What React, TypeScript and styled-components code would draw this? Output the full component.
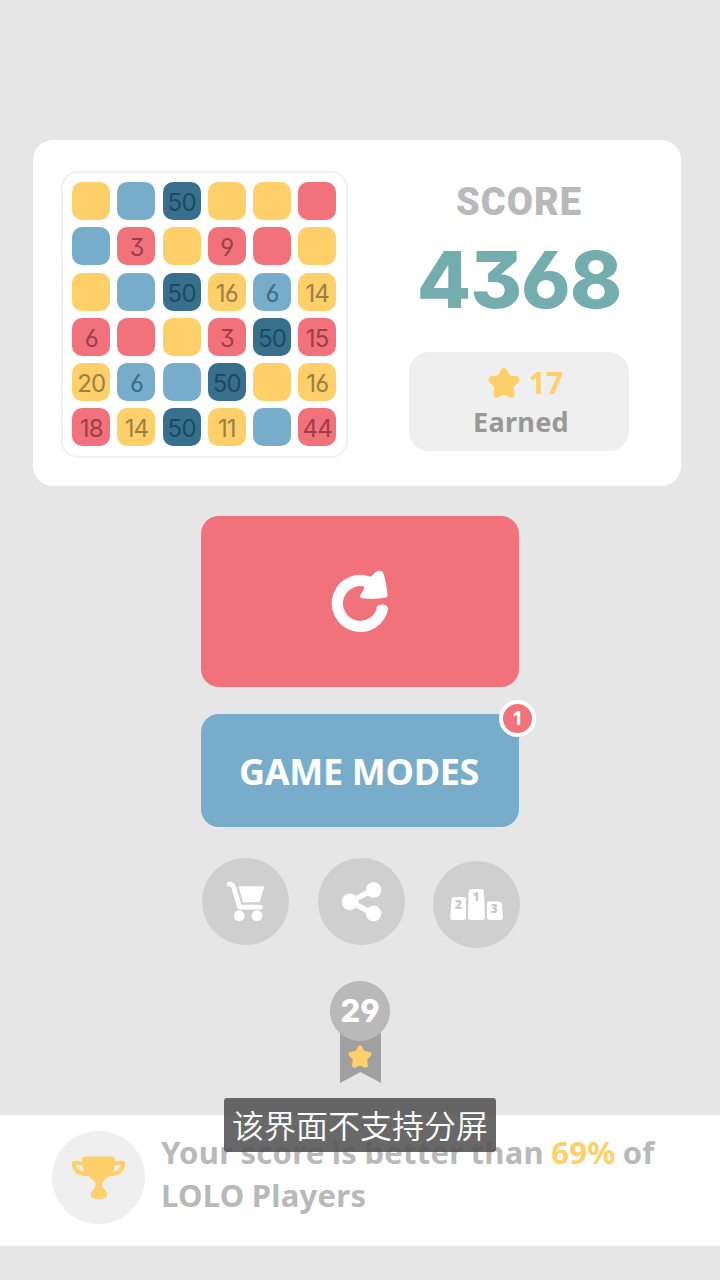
import React from "react";
import styled, { createGlobalStyle } from "styled-components";

const YELLOW = "#ffcf69";
const BLUE = "#77adcb";
const RED = "#f1727b";
const NAVY = "#386f8d";

const textFont = `"Noto Sans", "Open Sans", sans-serif`;
const displayFont = `Inter, "Liberation Sans", sans-serif`;

const GlobalStyle = createGlobalStyle`
  * { box-sizing: border-box; }
  body { margin: 0; background: #e6e6e6; font-family: ${textFont}; }
`;

const Screen = styled.main`
  position: relative;
  width: 720px;
  height: 1280px;
  overflow: hidden;
  padding-top: 140px;
  background: #e6e6e6;
  display: flex;
  flex-direction: column;
  align-items: center;
`;

const ScoreCard = styled.section`
  width: 648px;
  height: 346px;
  margin-right: 6px;
  padding: 31px 0 0 28px;
  background: #fff;
  border-radius: 20px;
  display: flex;
  align-items: flex-start;
`;

const Board = styled.div`
  width: 287px;
  height: 287px;
  padding: 9.3px;
  border: 2px solid #f1f1f2;
  border-radius: 17px;
  display: grid;
  grid-template-columns: repeat(6, 38px);
  grid-auto-rows: 38px;
  gap: 7.2px;
`;

const Tile = styled.div<{ $color: string; $ink: string }>`
  border-radius: 10px;
  background: ${(p) => p.$color};
  color: ${(p) => p.$ink};
  font: 400 24px/41px ${displayFont};
  font-feature-settings: "cv03", "cv04", "cv09";
  letter-spacing: -0.8px;
  text-align: center;
`;

const Summary = styled.div`
  width: 220px;
  margin-left: 61px;
  display: flex;
  flex-direction: column;
  align-items: center;
`;

const ScoreLabel = styled.div`
  margin-top: 11px;
  height: 40px;
  color: #b9b9b9;
  font: 900 38px/40px Roboto, sans-serif;
  letter-spacing: 1px;
`;

const ScoreValue = styled.div`
  margin-top: 17px;
  height: 80px;
  color: #74adae;
  font: 800 79px/80px ${displayFont};
  font-feature-settings: "cv03", "cv04", "cv09";
  letter-spacing: -1px;
  white-space: nowrap;
`;

const Earned = styled.div`
  margin-top: 33px;
  width: 220px;
  height: 99px;
  padding-top: 11px;
  border-radius: 20px;
  background: #efefef;
  color: #989898;
  display: flex;
  flex-direction: column;
  align-items: center;
  font: 700 27px/38px ${textFont};
  letter-spacing: 0.3px;
`;

const EarnedCaption = styled.span`
  margin-left: 4px;
`;

const EarnedCount = styled.div`
  display: flex;
  align-items: center;
  gap: 9px;
  height: 40px;
  margin-left: 13px;
  color: ${YELLOW};
  font-size: 30px;
`;

const ActionButton = styled.button<{ $color: string; $height: number; $top: number }>`
  position: relative;
  flex: none;
  width: 318px;
  height: ${(p) => p.$height}px;
  margin: ${(p) => p.$top}px 0 0;
  padding: 0;
  border: 0;
  border-radius: 18px;
  background: ${(p) => p.$color};
  color: #fff;
  display: flex;
  align-items: center;
  justify-content: center;
  font: 700 36px/50px ${textFont};
  letter-spacing: -0.3px;
`;

const ButtonLabel = styled.span`
  padding-top: 2px;
  margin-right: 2px;
`;

const Badge = styled.span`
  position: absolute;
  top: -14px;
  right: -17px;
  width: 37px;
  height: 37px;
  border: 4.5px solid #fff;
  border-radius: 50%;
  background: ${RED};
  font: 700 19px/28px ${textFont};
  text-align: center;
`;

const RoundActions = styled.nav`
  margin-top: 31px;
  height: 90px;
  display: flex;
  gap: 28.5px;
  margin-left: 2px;
`;

const RoundButton = styled.button<{ $drop?: number }>`
  width: 87px;
  height: 87px;
  margin: ${(p) => p.$drop ?? 0}px 0 0;
  padding: 0;
  border: 0;
  border-radius: 50%;
  background: #cfcfcf;
  svg { display: block; }
`;

const Medal = styled.div`
  margin-top: 33px;
  height: 103px;
  display: flex;
  flex-direction: column;
  align-items: center;
`;

const MedalDisc = styled.div`
  z-index: 1;
  width: 60px;
  height: 60px;
  border-radius: 50%;
  background: #b9b9b9;
  color: #fff;
  font: 800 31px/60px ${displayFont};
  font-feature-settings: "cv04";
  text-align: center;
`;

const Ribbon = styled.svg`
  margin-top: -14px;
  display: block;
`;

const Footer = styled.footer`
  align-self: stretch;
  margin-top: 31px;
  height: 131px;
  padding: 16px 0 0 52px;
  background: #fff;
  display: flex;
  gap: 16px;
`;

const TrophyDisc = styled.div`
  width: 93px;
  height: 93px;
  border-radius: 50%;
  background: #efefef;
  svg { display: block; }
`;

const Ranking = styled.p`
  margin: 0;
  color: #b9b9b9;
  font: 700 31px/42.5px ${textFont};
  letter-spacing: 0.25px;
  word-spacing: -1px;
  white-space: nowrap;
`;

const Percent = styled.span`
  color: ${YELLOW};
`;

const Toast = styled.div`
  position: absolute;
  left: 224px;
  top: 1098px;
  width: 272px;
  height: 54px;
  border-radius: 3px;
  background: rgba(82, 82, 82, 0.87);
  color: #fff;
  font: 350 32px/53px "Noto Sans CJK SC", sans-serif;
  text-align: center;
  white-space: nowrap;
`;

const tones: Record<string, [string, string]> = {
  y: [YELLOW, "#998044"],
  b: [BLUE, "#426b84"],
  r: [RED, "#9c3f4b"],
  n: [NAVY, "#1f4961"],
};

const board = [
  "y b n50 y y r",
  "b r3 y r9 r y",
  "y b n50 y16 b6 y14",
  "r6 r y r3 n50 r15",
  "y20 b6 b n50 y y16",
  "r18 y14 n50 y11 b r44",
];

const starPath =
  "M16 4.5 L19.5 11.4 L27.8 12.8 L22 18.8 L23.2 27 L16 23.8 L8.8 27 L10 18.8 L4.2 12.8 L12.5 11.4 Z";

const Star = ({ size }: { size: number }) => (
  <svg width={size} height={size} viewBox="0 0 32 32">
    <path d={starPath} fill={YELLOW} stroke={YELLOW} strokeWidth="7" strokeLinejoin="round" />
  </svg>
);

const RestartIcon = () => (
  <svg width="60" height="66" viewBox="0 0 60 66">
    <path d="M40 13.7 A22.9 22.9 0 1 0 52.8 38.3" fill="none" stroke="#fff" strokeWidth="11.2" />
    <ellipse cx="52.1" cy="38.6" rx="5.4" ry="3" fill="#fff" />
    <path
      d="M36.5 7 Q39.8 8.8 42 6.7 Q46 1.7 49.6 1.7 Q52.8 1.7 54 6 Q56.2 13.5 57.5 25.5 Q57.7 28.2 55.2 28.8 Q43 31 31.2 29 Q29.2 28.2 30.8 25.2 Q34.3 21.2 34.8 16.7 Z"
      fill="#fff"
    />
  </svg>
);

const CartIcon = () => (
  <svg width="87" height="87" viewBox="0 0 87 87" fill="#fff">
    <path d="M27 26.2 Q31 26 32 30 L37.5 49.2 H58.5" fill="none" stroke="#fff" strokeWidth="4.8" strokeLinecap="round" strokeLinejoin="round" />
    <path d="M37.5 29 H61.5 L57 43.5 H41.5 Z" stroke="#fff" strokeWidth="1.4" strokeLinejoin="round" />
    <circle cx="37.2" cy="57.7" r="5.4" />
    <circle cx="55" cy="57.7" r="5.4" />
  </svg>
);

const ShareIcon = () => (
  <svg width="87" height="87" viewBox="0 0 87 87" fill="#fff">
    <path d="M56 31.5 L32 43.7 L56 55.8" fill="none" stroke="#fff" strokeWidth="5.4" />
    <circle cx="32" cy="43.9" r="8.3" />
    <circle cx="55.6" cy="32" r="7.8" />
    <circle cx="55.6" cy="55.6" r="7.8" />
  </svg>
);

const PodiumDigit = styled.text`
  fill: #c8c8c8;
  font: 900 12px ${textFont};
  text-anchor: middle;
`;

const PodiumIcon = () => (
  <svg width="87" height="87" viewBox="0 0 87 87" fill="#fff">
    <path d="M21.5 36 H30 Q33 36 33 39 V56 Q33 59 30 59 H20 Q17 59 17.3 56 L18.4 39 Q18.6 36 21.5 36 Z" />
    <path d="M38.6 28 H48 Q50.7 28 50.9 31 L52 56 Q52 59 49 59 H38 Q35 59 35 56 L35.7 31 Q35.8 28 38.6 28 Z" />
    <path d="M56.5 40.5 H66 Q68.5 40.5 68.8 43 L70 56 Q70 59 67 59 H57 Q54 59 54 56 V43 Q54 40.5 56.5 40.5 Z" />
    <PodiumDigit x="25.5" y="47.6">2</PodiumDigit>
    <PodiumDigit x="43" y="39.6">1</PodiumDigit>
    <PodiumDigit x="61.3" y="51.6">3</PodiumDigit>
  </svg>
);

const TrophyIcon = () => (
  <svg width="93" height="93" viewBox="0 0 93 93" fill={YELLOW}>
    <path d="M30 28 Q30 25.5 33 25.5 H60 Q63 25.5 63 28 C63 37 62 42 56 46 Q51 49.5 50 53 Q50 56 53 59 Q56 62 55 65 Q53 68 46.5 68 Q40 68 38.5 65 Q38 62 41 59 Q44 56 43.5 53 Q42.5 49.5 37.5 46 C31 42 30 37 30 28 Z" />
    <path
      d="M31 33 Q26 31 21.8 32 Q22.5 43 36 43.2 M62 33 Q67 31 71.2 32 Q70.5 43 57 43.2"
      fill="none"
      stroke={YELLOW}
      strokeWidth="4"
      strokeLinejoin="round"
    />
  </svg>
);

export default function App() {
  return (
    <>
      <GlobalStyle />
      <Screen>
        <ScoreCard>
          <Board>
            {board.flatMap((row, r) =>
              row.split(" ").map((cell, c) => (
                <Tile key={`${r}-${c}`} $color={tones[cell[0]][0]} $ink={tones[cell[0]][1]}>
                  {cell.slice(1)}
                </Tile>
              ))
            )}
          </Board>
          <Summary>
            <ScoreLabel>SCORE</ScoreLabel>
            <ScoreValue>4368</ScoreValue>
            <Earned>
              <EarnedCount>
                <Star size={32} />
                <span>17</span>
              </EarnedCount>
              <EarnedCaption>Earned</EarnedCaption>
            </Earned>
          </Summary>
        </ScoreCard>

        <ActionButton $color={RED} $height={171} $top={30} aria-label="Restart">
          <RestartIcon />
        </ActionButton>
        <ActionButton $color={BLUE} $height={113} $top={27}>
          <ButtonLabel>GAME MODES</ButtonLabel>
          <Badge>1</Badge>
        </ActionButton>

        <RoundActions>
          <RoundButton aria-label="Shop"><CartIcon /></RoundButton>
          <RoundButton aria-label="Share"><ShareIcon /></RoundButton>
          <RoundButton aria-label="Leaderboard" $drop={3}><PodiumIcon /></RoundButton>
        </RoundActions>

        <Medal>
          <MedalDisc>29</MedalDisc>
          <Ribbon width="41" height="56" viewBox="0 0 41 56">
            <path d="M0 0 H41 V56 L20.5 45 L0 56 Z" fill="#a0a0a0" />
            <svg x="7.5" y="17.2" width="25" height="25" viewBox="0 0 32 32">
              <path d={starPath} fill={YELLOW} stroke={YELLOW} strokeWidth="6" strokeLinejoin="round" />
            </svg>
          </Ribbon>
        </Medal>

        <Footer>
          <TrophyDisc><TrophyIcon /></TrophyDisc>
          <Ranking>
            Your score is better than <Percent>69%</Percent> of
            <br />
            LOLO Players
          </Ranking>
        </Footer>

        <Toast>该界面不支持分屏</Toast>
      </Screen>
    </>
  );
}
